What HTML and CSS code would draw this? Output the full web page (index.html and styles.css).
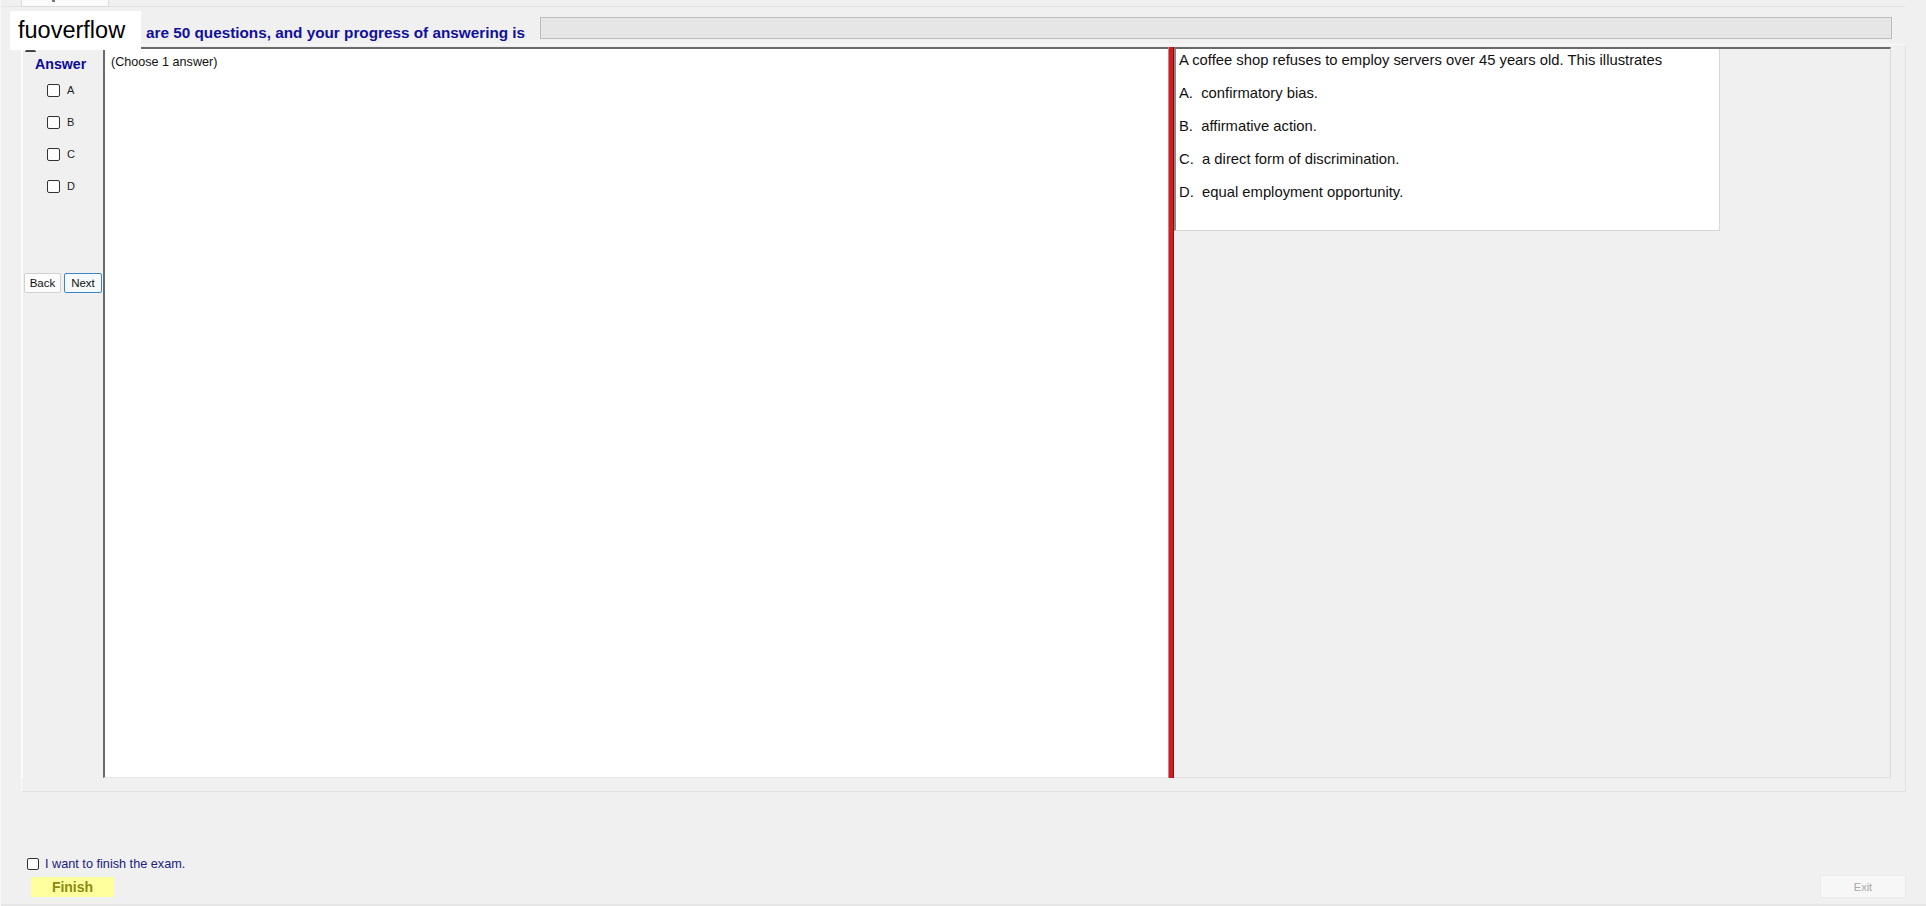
FILE: index.html
```html
<!DOCTYPE html>
<html>
<head>
<meta charset="utf-8">
<link rel="stylesheet" href="styles.css">
</head>
<body>
<div class="app">
  <div class="tabs"><div class="tab"><span class="tab-glyph"></span></div></div>
  <div class="header">
    <div class="title">are 50 questions, and your progress of answering is</div>
    <div class="progress"></div>
    <div class="brand">fuoverflow</div>
    <span class="dot"></span>
  </div>
  <div class="panel">
    <div class="left">
      <div class="answer-label">Answer</div>
      <label class="opt"><span class="box"></span><span>A</span></label>
      <label class="opt"><span class="box"></span><span>B</span></label>
      <label class="opt"><span class="box"></span><span>C</span></label>
      <label class="opt"><span class="box"></span><span>D</span></label>
      <div class="nav">
        <button class="btn">Back</button>
        <button class="btn btn-focus">Next</button>
      </div>
    </div>
    <div class="main">(Choose 1 answer)</div>
    <div class="splitter"></div>
    <div class="right">
      <div class="question">
        <p>A coffee shop refuses to employ servers over 45 years old. This illustrates</p>
        <p>A.&nbsp; confirmatory bias.</p>
        <p>B.&nbsp; affirmative action.</p>
        <p>C.&nbsp; a direct form of discrimination.</p>
        <p>D.&nbsp; equal employment opportunity.</p>
      </div>
    </div>
  </div>
  <div class="footer">
    <div class="footer-left">
      <label class="finish-check"><span class="box"></span><span>I want to finish the exam.</span></label>
      <button class="finish">Finish</button>
    </div>
    <button class="exit">Exit</button>
  </div>
</div>
</body>
</html>
```

FILE: styles.css
```css
* { box-sizing: border-box; }
html, body { margin: 0; padding: 0; }
body {
  background: #f0f0f0;
  font-family: "Liberation Sans", Arial, sans-serif;
  width: 1926px;
  height: 906px;
  overflow: hidden;
}
.app {
  width: 1926px;
  height: 906px;
  display: flex;
  flex-direction: column;
  position: relative;
  border-left: 1px solid #f7f7f7;
}
.tabs {
  height: 7px;
  border-bottom: 1px solid #e4e4e4;
  padding-left: 20px;
  display: flex;
  margin-right: 21px;
}
.tab {
  width: 88px;
  height: 7px;
  background: #fbfbfb;
  border: 1px solid #dcdcdc;
  border-top: none;
  position: relative;
}
.tab-glyph {
  position: absolute;
  left: 30px;
  top: 0;
  width: 3px;
  height: 2px;
  background: #777;
}
.header {
  height: 37px;
  display: flex;
  align-items: flex-start;
  padding-left: 145px;
  position: relative;
}
.title {
  color: #10109a;
  font-weight: bold;
  font-size: 15.3px;
  margin-top: 17px;
  line-height: 17px;
  white-space: nowrap;
}
.progress {
  margin-left: 15px;
  margin-top: 10px;
  width: 1352px;
  height: 22px;
  background: #e6e6e6;
  border: 1px solid #bcbcbc;
  flex: none;
}
.brand {
  position: absolute;
  left: 9px;
  top: 4px;
  width: 131px;
  height: 39px;
  background: #ffffff;
  color: #000;
  font-size: 23.5px;
  line-height: 39px;
  padding-left: 8px;
  font-family: "Liberation Sans", Arial, sans-serif;
}
.dot {
  position: absolute;
  left: 24px;
  top: 43px;
  width: 11px;
  height: 2px;
  border-radius: 6px 6px 0 0;
  background: #444;
}
.panel {
  margin-left: 20px;
  width: 1885px;
  height: 748px;
  border: 1px solid #fbfbfb;
  border-right-color: #e2e2e2;
  border-bottom-color: #e2e2e2;
  display: flex;
  padding-top: 2px;
  padding-right: 12px;
}
.left {
  width: 81px;
  height: 731px;
  padding-top: 9px;
  display: flex;
  flex-direction: column;
  border-left: 1px solid #ffffff;
}
.answer-label {
  color: #0a0a9a;
  font-weight: bold;
  font-size: 14.2px;
  line-height: 16px;
  padding-left: 12px;
}
.opt {
  height: 32px;
  display: flex;
  align-items: center;
  padding-left: 24px;
  font-size: 11px;
  color: #222;
}
.opt:first-of-type { margin-top: 2px; }
.box {
  width: 13px;
  height: 13px;
  border: 1px solid #333;
  border-radius: 2px;
  background: #fff;
  margin-right: 7px;
  flex: none;
}
.nav {
  margin-top: 71px;
  padding-left: 1px;
  display: flex;
  gap: 3px;
}
.btn {
  font-family: "Liberation Sans", Arial, sans-serif;
  font-size: 11.5px;
  height: 20px;
  width: 37px;
  padding: 0;
  background: #fdfdfd;
  border: 1px solid #d0d0d0;
  border-radius: 2px;
  color: #111;
}
.btn-focus {
  width: 38px;
  border: 1px solid #3b86c4;
  background: #f5f9fc;
}
.main {
  width: 1065px;
  height: 731px;
  background: #ffffff;
  border-left: 2px solid #6a6a6a;
  border-top: 2px solid #6a6a6a;
  border-bottom: 1px solid #e6e6e6;
  font-size: 12.6px;
  line-height: 14px;
  padding: 6px 0 0 6px;
  color: #111;
}
.splitter {
  width: 6px;
  height: 731px;
  background: #e8121a;
  border-left: 1px solid #9a9a9a;
  border-right: 1px solid #5a2020;
}
.right {
  width: 717px;
  height: 731px;
  border-top: 2px solid #6a6a6a;
  border-right: 1px solid #dadada;
  border-bottom: 1px solid #e0e0e0;
  background: #f0f0f0;
}
.question {
  width: 546px;
  height: 182px;
  background: #ffffff;
  border-left: 2px solid #8a8a8a;
  border-right: 1px solid #d8d8d8;
  border-bottom: 1px solid #d8d8d8;
  padding: 3px 0 0 3px;
  font-size: 14.8px;
  color: #111;
}
.question p {
  margin: 0 0 16px;
  line-height: 17px;
  white-space: nowrap;
}
.footer {
  flex: 1;
  display: flex;
  justify-content: space-between;
  align-items: flex-end;
  padding: 0 20px 7px 26px;
  border-bottom: 2px solid #e6e6e6;
}
.footer-left {
  display: flex;
  flex-direction: column;
}
.finish-check {
  display: flex;
  align-items: center;
  font-size: 12.7px;
  color: #202080;
  height: 14px;
}
.finish-check .box {
  width: 12px;
  height: 12px;
  margin-right: 6px;
}
.finish {
  margin-top: 6px;
  margin-left: 4px;
  width: 83px;
  height: 20px;
  background: #ffff9e;
  border: none;
  color: #8a8a10;
  font-family: "Liberation Sans", Arial, sans-serif;
  font-weight: bold;
  font-size: 14px;
  padding: 0;
}
.exit {
  width: 86px;
  height: 23px;
  margin-bottom: -1px;
  background: #f7f7f7;
  border: 1px solid #eaeaea;
  color: #a8a8a8;
  font-family: "Liberation Sans", Arial, sans-serif;
  font-size: 11px;
  padding: 0;
}
```
